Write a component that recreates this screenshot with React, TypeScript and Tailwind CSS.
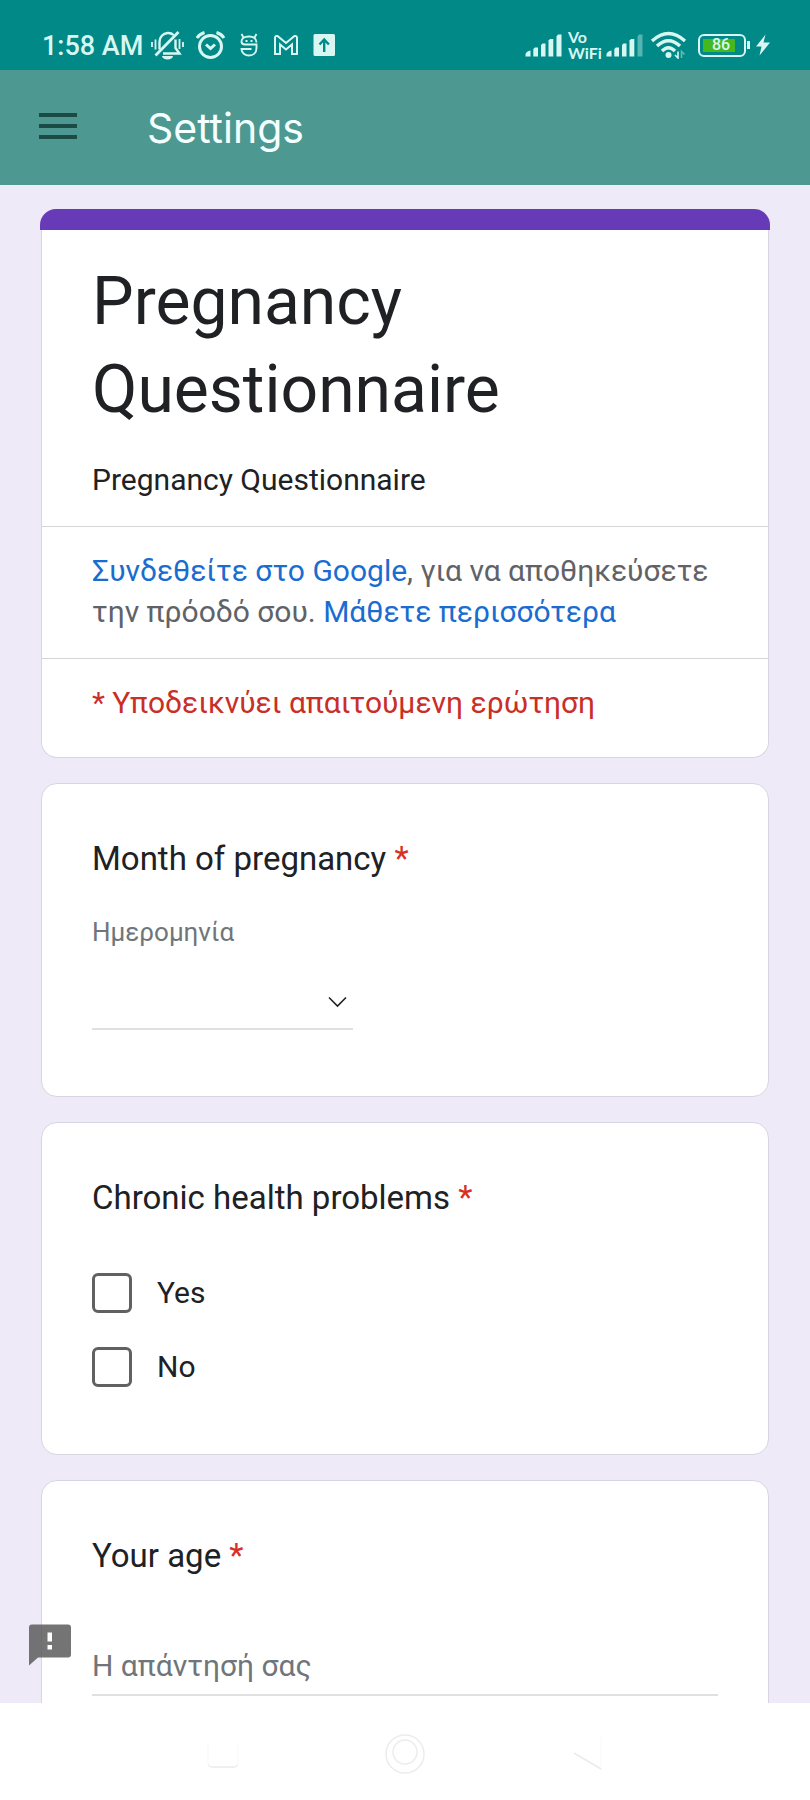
import type { ReactNode } from "react";

function BellOffIcon() {
  return (
    <svg width="33" height="30" viewBox="0 0 33 30" fill="none" stroke="currentColor" strokeWidth="2.4" aria-hidden="true">
      <path d="M8.500 19.500V12C8.500 7 12 3.500 16.500 3C19 2.800 21 3.500 22.500 5" />
      <path d="M24.500 9.500V18L28.500 23.500H12" />
      <path d="M27.500 2L4.500 25.500" strokeWidth="2.800" />
      <path d="M11 26a5.500 3.500 0 0 0 11 0z" fill="currentColor" stroke="none" />
      <path d="M1 12v5M4.500 9.500v10M28.500 9v10M32 12v5" strokeWidth="1.800" />
    </svg>
  );
}

function AlarmIcon() {
  return (
    <svg width="30" height="30" viewBox="0 0 30 30" fill="none" stroke="currentColor" strokeWidth="3" aria-hidden="true">
      <circle cx="14.500" cy="16.500" r="11" />
      <path d="M10 14.500l4.500 4 4.500-4" />
      <path d="M1 8Q3.500 4 8.500 2.500M28 8Q25.500 4 20.500 2.500" />
    </svg>
  );
}

function MascotIcon() {
  return (
    <svg width="22" height="26" viewBox="0 0 22 26" fill="none" stroke="currentColor" strokeWidth="1.900" aria-hidden="true">
      <path d="M3.500 2l2 3.500M18.500 2l-2 3.500" />
      <path d="M18.500 10.500C18.500 6.500 15.500 4.500 11 4.500S3.500 6.500 3.500 9.500Q3.500 12.500 7 12.500H18.500V16C18.500 21 15 23.500 11 23.500S3.500 21 3.500 17H13.500" />
      <path d="M7.500 9h2M12.500 9h2" strokeWidth="2.200" />
    </svg>
  );
}

function MailIcon() {
  return (
    <svg width="28" height="24" viewBox="0 0 28 24" fill="none" stroke="currentColor" strokeWidth="2" aria-hidden="true">
      <path d="M3 21V5Q3 2.500 5.500 3L14 10L22.500 3Q25 2.500 25 5V21H20V11.500L14 16.500L8 11.500V21Z" />
    </svg>
  );
}

function UploadBoxIcon() {
  return (
    <svg width="24" height="24" viewBox="0 0 24 24" fill="none" aria-hidden="true">
      <rect x="1.500" y="1" width="21.500" height="22" rx="1.500" fill="currentColor" />
      <path d="M12.200 19V7M7.500 11.500l4.700-5 4.700 5" stroke="#008987" strokeWidth="2.400" />
    </svg>
  );
}

function SignalIcon({ weak = false }: { weak?: boolean }) {
  return (
    <svg width="37" height="24" viewBox="0 0 37 24" fill="currentColor" aria-hidden="true">
      <path d="M0.500 23.500v-2.500q1-3 5-3.500v6z" />
      <path d="M8.300 23.500v-7.500l1.500-1.500h3.200v9z" />
      <path d="M16 23.500v-11.500l1.500-1.500h3v13z" />
      <path d="M23.500 23.500v-16l1.500-1.500h3.300v17.500z" />
      <path d="M31.500 23.500v-20l1.500-2h3.500v22z" opacity={weak ? 0.4 : 1} />
    </svg>
  );
}

function WifiIcon() {
  return (
    <svg width="39" height="28" viewBox="0 0 39 28" fill="none" stroke="currentColor" strokeWidth="3.400" aria-hidden="true">
      <path d="M3 10Q19.500-5 36 10" />
      <path d="M8 15Q19.500 4.500 31 15" />
      <path d="M13 20Q19.500 13.500 26 20" />
      <circle cx="19.500" cy="24" r="3" fill="currentColor" stroke="none" />
      <path d="M29 20.500v6.500l-3-3" strokeWidth="1.600" />
      <path d="M32.500 27v-6.500l3 3" strokeWidth="1.600" opacity="0.450" />
    </svg>
  );
}

function BatteryIcon() {
  return (
    <div className="flex items-center gap-px pl-1" role="img" aria-label="Battery">
      <div className="flex h-[23px] w-12 rounded-md border-2 border-[#d8f7f3] p-[3px]">
        <div className="flex flex-1 items-center justify-center bg-[#44b91f] pl-1 text-base font-medium leading-none">
          86
        </div>
        <div className="w-1.5" />
      </div>
      <div className="h-2 w-[3px] bg-current" />
    </div>
  );
}

function StatusBar() {
  return (
    <div className="flex h-[70px] shrink-0 items-end justify-between bg-[#008987] pr-10 pb-2.5 pl-[42px] text-[#d8f7f3]">
      <div className="flex h-[30px] items-center gap-3">
        <span className="-mr-1 pt-0.5 text-[27px] leading-[30px] font-medium">1:58 AM</span>
        <BellOffIcon />
        <AlarmIcon />
        <MascotIcon />
        <MailIcon />
        <UploadBoxIcon />
      </div>
      <div className="flex h-[30px] items-center gap-1.5">
        <SignalIcon />
        <span className="flex w-8 flex-col font-[Lato] text-base leading-4 font-bold">
          <span>Vo</span>
          <span>WiFi</span>
        </span>
        <SignalIcon weak />
        <WifiIcon />
        <BatteryIcon />
        <svg width="14" height="22" viewBox="0 0 14 22" fill="currentColor" aria-hidden="true">
          <path d="M9.500 0.500L0 12.500H5.500L3.500 21.500L14 8.500H7.500Z" />
        </svg>
      </div>
    </div>
  );
}

function AppBar() {
  return (
    <header className="flex h-[115px] shrink-0 items-center gap-[70px] bg-[#4d9991] pl-[39px]">
      <button type="button" aria-label="Menu" className="flex w-[38px] flex-col gap-[7px] pb-1">
        <span className="h-1 bg-[#1c4a45]" />
        <span className="h-1 bg-[#1c4a45]" />
        <span className="h-1 bg-[#1c4a45]" />
      </button>
      <h1 className="font-[Inter] text-[41px] leading-[50px] text-[#f4ffff]">Settings</h1>
    </header>
  );
}

function Question({ title, id, children }: { title: string; id: string; children: ReactNode }) {
  return (
    <section aria-labelledby={id} className="rounded-2xl border border-[#d8d5e2] bg-white px-[50px] pt-[50px]">
      <h3 id={id} className="text-[33px] leading-[50px]">
        {title} <span className="text-[#d93025]">*</span>
      </h3>
      {children}
    </section>
  );
}

function Choice({ label }: { label: string }) {
  return (
    <label className="flex items-center gap-[25px] text-[30px] leading-10">
      <input type="checkbox" className="size-10 appearance-none rounded-md border-[3px] border-[#616161] checked:bg-[#673ab7]" />
      {label}
    </label>
  );
}

function NavigationBar() {
  return (
    <nav aria-label="System" className="flex h-[97px] shrink-0 items-center justify-center gap-[136px] bg-white pt-1 text-[#ececec]">
      <button type="button" aria-label="Recent apps">
        <svg width="46" height="46" viewBox="0 0 46 46" fill="none" stroke="currentColor">
          <path d="M8 12V32Q8 36 12 36H34Q38 36 38 32V12" strokeWidth="1" opacity="0.400" />
          <path d="M8.500 34Q9.500 36 12 36H34Q36.500 36 37.500 34" strokeWidth="1.500" />
        </svg>
      </button>
      <button type="button" aria-label="Home">
        <svg width="46" height="46" viewBox="0 0 46 46" fill="none" stroke="currentColor" strokeWidth="1.500">
          <circle cx="23" cy="23" r="19" />
          <circle cx="23" cy="21" r="12" />
        </svg>
      </button>
      <button type="button" aria-label="Back">
        <svg width="46" height="46" viewBox="0 0 46 46" fill="none" stroke="currentColor">
          <path d="M10 22L37 38" strokeWidth="1.800" />
          <path d="M37 38V6" strokeWidth="1" opacity="0.300" />
        </svg>
      </button>
    </nav>
  );
}

export default function App() {
  return (
    <div className="flex h-screen flex-col bg-[#eeeaf8] font-[Roboto,'Noto_Sans',sans-serif] text-[#202124]">
      <StatusBar />
      <AppBar />
      <div className="relative flex min-h-0 flex-1 flex-col">
        <main className="flex min-h-0 flex-1 flex-col overflow-y-auto px-10 pt-6 [scrollbar-width:none]">
          <div className="h-[21px] shrink-0 rounded-t-2xl bg-[#673ab7]" />
          <form className="mx-px flex flex-col gap-[25px] pb-6">
            <section className="rounded-b-2xl border border-t-0 border-[#d8d5e2] bg-white">
              <div className="px-[50px] pt-7 pb-[26px]">
                <h2 className="text-[66px] leading-[88px]">
                  Pregnancy
                  <br />
                  Questionnaire
                </h2>
                <p className="pt-[26px] text-[30px] leading-10">Pregnancy Questionnaire</p>
              </div>
              <p className="border-t border-[#d5d5d8] px-[50px] pt-[23px] pb-[26px] text-[30px] leading-[41px] text-[#5f6368]">
                <a href="#signin" className="text-[#1a6dd0]">Συνδεθείτε στο Google</a>, για να αποθηκεύσετε την πρόοδό σου.{" "}
                <a href="#more" className="text-[#1a6dd0]">Μάθετε περισσότερα</a>
              </p>
              <p className="border-t border-[#d5d5d8] px-[50px] pt-[23px] pb-[34px] text-[30px] leading-[41px] text-[#c92e27]">
                * Υποδεικνύει απαιτούμενη ερώτηση
              </p>
            </section>

            <Question id="month" title="Month of pregnancy">
              <div className="flex flex-col pb-[66px]">
                <label htmlFor="date" className="pt-[30px] text-[26px] leading-9 text-[#70757a]">Ημερομηνία</label>
                <div className="grid w-[261px] items-center pt-[30px]">
                  <select id="date" className="col-start-1 row-start-1 h-[50px] appearance-none border-b-2 border-[#e0e0e0] text-[30px]">
                    <option />
                    <option>1</option>
                    <option>2</option>
                    <option>3</option>
                  </select>
                  <svg className="pointer-events-none col-start-1 row-start-1 mr-1.5 mb-1.5 justify-self-end" width="19" height="12" viewBox="0 0 19 12" fill="none" stroke="#202124" strokeWidth="1.600" aria-hidden="true">
                    <path d="M1 1.500L9.500 10L18 1.500" />
                  </svg>
                </div>
              </div>
            </Question>

            <Question id="chronic" title="Chronic health problems">
              <div className="flex flex-col gap-[34px] pt-[50px] pb-[67px]">
                <Choice label="Yes" />
                <Choice label="No" />
              </div>
            </Question>

            <Question id="age" title="Your age">
              <div className="pt-[65px] pb-16">
                <input
                  type="text"
                  aria-labelledby="age"
                  placeholder="Η απάντησή σας"
                  className="block h-[50px] w-full border-b-2 border-[#e0e0e0] pb-2.5 text-[30px] placeholder:text-[#70757a]"
                />
              </div>
            </Question>
          </form>
        </main>
        <button type="button" aria-label="Report a problem" className="absolute bottom-9 left-7 text-[#5c5c5c]/85">
          <svg width="44" height="44" viewBox="0 0 44 44" fill="currentColor">
            <path fillRule="evenodd" d="M4 1.500H40Q43 1.500 43 4.500V31.500Q43 34.500 40 34.500H10L1 42.500V4.500Q1 1.500 4 1.500ZM19.500 9.500V18.500H24V9.500ZM19.500 22V26.500H24V22Z" />
          </svg>
        </button>
      </div>
      <NavigationBar />
    </div>
  );
}
